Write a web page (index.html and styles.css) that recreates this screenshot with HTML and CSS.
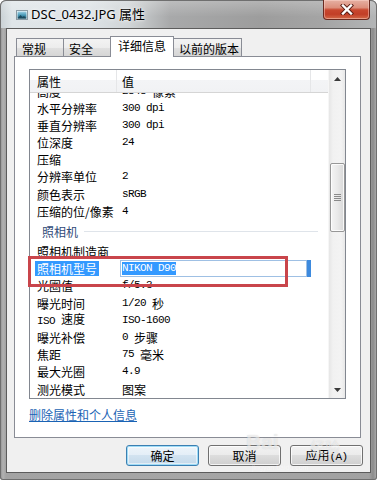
FILE: index.html
```html
<!DOCTYPE html>
<html lang="zh">
<head>
<meta charset="utf-8">
<link rel="stylesheet" href="styles.css">
</head>
<body>
<div class="window">
  <div class="titlebar">
    <svg class="app-icon" width="12" height="10" viewBox="0 0 12 10">
      <defs>
        <linearGradient id="ig" x1="0" y1="0" x2="0" y2="1">
          <stop offset="0" stop-color="#9fd2e6"/>
          <stop offset="0.5" stop-color="#4b9bb8"/>
          <stop offset="1" stop-color="#1d5a73"/>
        </linearGradient>
      </defs>
      <rect x="0.5" y="0.5" width="11" height="9" fill="#f4f7f8" stroke="#8a9aa3"/>
      <rect x="1.5" y="1.5" width="9" height="7" fill="url(#ig)"/>
      <path d="M1.5 8.5 L4.5 5 L6.5 7 L8 6 L10.5 8.5 Z" fill="#1a4a5e"/>
    </svg>
    <span class="title">DSC_0432.JPG 属性</span>
    <div class="close">
      <svg width="14" height="11" viewBox="0 0 14 11">
        <path d="M3 1.5 L11 9.5 M11 1.5 L3 9.5" stroke="#5a1f16" stroke-width="4.2" stroke-linecap="square"/>
        <path d="M3 1.5 L11 9.5 M11 1.5 L3 9.5" stroke="#ffffff" stroke-width="2.4" stroke-linecap="square"/>
      </svg>
    </div>
  </div>
  <div class="client">
    <div class="tabs">
      <div class="tab t1">常规</div>
      <div class="tab t2">安全</div>
      <div class="tab active">详细信息</div>
      <div class="tab t4">以前的版本</div>
    </div>
    <div class="panel">
      <div class="list">
        <div class="list-main">
          <div class="header">
            <div class="hcell c1">属性</div>
            <div class="hcell c2">值</div>
            <div class="hcell c3"></div>
          </div>
          <div class="rows">
            <div class="rows-inner">
              <div class="row"><div class="k"><span>高度</span></div><div class="v"><span class="a">2848 </span>像素</div></div>
              <div class="row"><div class="k"><span>水平分辨率</span></div><div class="v"><span class="a">300 dpi</span></div></div>
              <div class="row"><div class="k"><span>垂直分辨率</span></div><div class="v"><span class="a">300 dpi</span></div></div>
              <div class="row"><div class="k"><span>位深度</span></div><div class="v"><span class="a">24</span></div></div>
              <div class="row"><div class="k"><span>压缩</span></div><div class="v"></div></div>
              <div class="row"><div class="k"><span>分辨率单位</span></div><div class="v"><span class="a">2</span></div></div>
              <div class="row"><div class="k"><span>颜色表示</span></div><div class="v"><span class="a">sRGB</span></div></div>
              <div class="row"><div class="k"><span>压缩的位/像素</span></div><div class="v"><span class="a">4</span></div></div>
              <div class="group"><span>照相机</span><i></i></div>
              <div class="row"><div class="k"><span>照相机制造商</span></div><div class="v"></div></div>
              <div class="row sel"><div class="k"><span>照相机型号</span></div><div class="v"><div class="edit"><span class="a picked">NIKON D90</span></div><div class="edit-bar"></div></div></div>
              <div class="row"><div class="k"><span>光圈值</span></div><div class="v"><span class="a">f/5.3</span></div></div>
              <div class="row"><div class="k"><span>曝光时间</span></div><div class="v"><span class="a">1/20 </span>秒</div></div>
              <div class="row"><div class="k"><span><span class="a">ISO </span>速度</span></div><div class="v"><span class="a">ISO-1600</span></div></div>
              <div class="row"><div class="k"><span>曝光补偿</span></div><div class="v"><span class="a">0 </span>步骤</div></div>
              <div class="row"><div class="k"><span>焦距</span></div><div class="v"><span class="a">75 </span>毫米</div></div>
              <div class="row"><div class="k"><span>最大光圈</span></div><div class="v"><span class="a">4.9</span></div></div>
              <div class="row"><div class="k"><span>测光模式</span></div><div class="v">图案</div></div>
            </div>
          </div>
        </div>
        <div class="scrollbar">
          <div class="arrow"><svg width="7" height="4" viewBox="0 0 7 4"><path d="M0 4 L3.5 0 L7 4 Z" fill="#3a3a3a"/></svg></div>
          <div class="track">
            <div class="thumb">
              <svg width="7" height="7" viewBox="0 0 7 7"><path d="M0 0.5 H7 M0 2.5 H7 M0 4.5 H7 M0 6.5 H7" stroke="#8a8a8a" stroke-width="1"/></svg>
            </div>
          </div>
          <div class="arrow"><svg width="7" height="4" viewBox="0 0 7 4"><path d="M0 0 L7 0 L3.5 4 Z" fill="#3a3a3a"/></svg></div>
        </div>
        <div class="annot"></div>
      </div>
      <div class="link-row"><a class="link">删除属性和个人信息</a></div>
    </div>
    <div class="buttons">
      <button class="btn default">确定</button>
      <button class="btn">取消</button>
      <button class="btn">应用<span class="a">(A)</span></button>
    </div>
  </div>
  <div class="watermark"><span class="wm-bai">Bai</span><span class="wm-jy">经验</span><span class="wm-url">jingyan.baidu.com</span></div>
</div>
</body>
</html>
```

FILE: styles.css
```css
* { box-sizing: border-box; margin: 0; padding: 0; }
html, body { background: #ffffff; }
body {
  width: 377px;
  height: 480px;
  overflow: hidden;
  font-family: "Noto Sans CJK SC", sans-serif;
  font-size: 12px;
  color: #000;
}

.window {
  position: relative;
  width: 377px;
  height: 480px;
  display: flex;
  flex-direction: column;
  padding-bottom: 7px;
  border-radius: 6px 6px 3px 3px;
  background: linear-gradient(90deg, #8e8e8e 0, #b2b2b2 3px, #a3a3a3 6px, #a6a6a6 50%, #a1a1a1 369px, #8c8c8c 373px, #b0b0b0 377px);
  box-shadow: inset 0 0 0 1px #6f6f6f;
  overflow: hidden;
}

.titlebar {
  height: 28px;
  flex: none;
  display: flex;
  align-items: flex-start;
  border-radius: 6px 6px 0 0;
  background:
    linear-gradient(180deg, rgba(255,255,255,0.25) 0, rgba(255,255,255,0) 60%),
    linear-gradient(90deg, #c9d0d4 0, #dfe5e8 12px, #dde3e6 90px, #cfd3d5 130px, #a8a9aa 170px, #9d9d9d 260px, #a4a4a4 320px, #b3b5b6 377px);
  box-shadow: inset 0 1px 0 #6f6f6f, inset 1px 0 0 #6f6f6f, inset -1px 0 0 #6f6f6f;
}

.app-icon { margin: 10px 0 0 16px; flex: none; }

.title {
  margin: 4px 0 0 3px;
  font-family: "Noto Sans", "Noto Sans CJK SC", sans-serif;
  font-size: 13px;
  line-height: 20px;
  color: #000;
  text-shadow: 0 0 5px rgba(255,255,255,0.9), 0 0 2px rgba(255,255,255,0.8);
  white-space: nowrap;
}

.close {
  margin-left: auto;
  margin-right: 7px;
  width: 47px;
  height: 20px;
  flex: none;
  display: flex;
  align-items: center;
  justify-content: center;
  border: 1px solid #6a2a20;
  border-top: none;
  border-radius: 0 0 4px 4px;
  background: linear-gradient(180deg, #e6b1a3 0, #dc8f7c 40%, #c8482f 52%, #c23e27 75%, #d36a48 100%);
  box-shadow: inset 0 0 0 1px rgba(255,220,210,0.45);
}

.client {
  flex: 1;
  margin: 0 6px;
  border: 1px solid #5c5c5c;
  background: #f0f0f0;
  padding-top: 7px;
  display: flex;
  flex-direction: column;
}

.tabs {
  height: 21px;
  margin-left: 9px;
  margin-bottom: -1px;
  display: flex;
  align-items: flex-end;
}

.tab {
  height: 19px;
  border: 1px solid #898c95;
  border-bottom: none;
  margin-right: -1px;
  padding: 2px 0 0 5px;
  line-height: 16px;
  font-size: 12px;
  white-space: nowrap;
  background: linear-gradient(180deg, #f3f3f3 0, #ececec 50%, #e0e0e0 50%, #d4d4d4 100%);
  color: #000;
}
.t1, .t2 { width: 48px; }
.t4 { width: 69px; }
.tab.active {
  width: 64px;
  height: 21px;
  padding: 1px 0 0 7px;
  position: relative;
  z-index: 1;
  background: #ffffff;
}

.panel {
  width: 347px;
  height: 382px;
  margin-left: 7px;
  border: 1px solid #898c95;
  background: #ffffff;
  padding: 12px 14px 0 14px;
}

.list {
  position: relative;
  width: 317px;
  height: 330px;
  border: 1px solid #828790;
  display: flex;
}

.list-main {
  width: 298px;
  display: flex;
  flex-direction: column;
}

.header {
  height: 23px;
  flex: none;
  display: flex;
  background: linear-gradient(180deg, #ffffff 0, #ffffff 45%, #f3f4f6 46%, #f1f2f4 100%);
  border-bottom: 1px solid #d5d5d5;
}
.hcell {
  line-height: 22px;
  padding-top: 1px;
  white-space: nowrap;
}
.hcell.c1 { width: 87px; padding-left: 7px; border-right: 1px solid #e5e6e8; }
.hcell.c2 { width: 194px; padding-left: 5px; border-right: 1px solid #e5e6e8; }
.hcell.c3 { flex: 1; }

.rows {
  flex: 1;
  overflow: hidden;
}
.rows-inner { margin-top: -10.6px; }

.row {
  height: 17.2px;
  display: flex;
  align-items: center;
  line-height: 15px;
  white-space: nowrap;
}
.k { width: 86px; flex: none; padding-left: 5px; }
.k > span { display: inline-block; padding: 0 2px; }
.v { padding-left: 6px; display: flex; align-items: center; }

.a {
  font-family: "Liberation Mono", monospace;
  font-size: 11px;
  letter-spacing: -0.6px;
  white-space: pre;
}

.group {
  height: 23px;
  display: flex;
  align-items: center;
  padding-left: 12px;
  color: #2f4a78;
}
.group i {
  flex: 1;
  height: 1px;
  margin: 1px 10px 0 6px;
  background: #dfe4ea;
}

.row.sel .k > span { background: #3399ff; color: #ffffff; }
.edit {
  width: 187px;
  height: 17px;
  margin-left: -2px;
  padding-left: 1px;
  border: 1px solid #9fc0e4;
  display: flex;
  align-items: center;
}
.picked { background: #3399ff; color: #ffffff; line-height: 13px; }
.edit-bar { width: 4px; height: 17px; background: #3d8ade; }

.scrollbar {
  width: 17px;
  display: flex;
  flex-direction: column;
  background: linear-gradient(90deg, #e6e6e6 0, #f1f1f1 25%, #f3f3f3 75%, #e8e8e8 100%);
  border-left: 1px solid #f6f6f6;
}
.arrow {
  height: 17px;
  flex: none;
  display: flex;
  align-items: center;
  justify-content: center;
}
.track { flex: 1; }
.thumb {
  margin: 76px 0 0 1px;
  width: 15px;
  height: 69px;
  border: 1px solid #979797;
  border-radius: 2px;
  background: linear-gradient(90deg, #f4f4f4 0, #e9e9e9 50%, #d8d8d8 100%);
  box-shadow: inset 0 0 0 1px rgba(255,255,255,0.8);
  display: flex;
  align-items: center;
  justify-content: center;
}

.annot {
  position: absolute;
  left: -2px;
  top: 186px;
  width: 260px;
  height: 31px;
  border: 3px solid #c9454b;
}

.link-row {
  margin-top: 8px;
  line-height: 16px;
}
.link {
  color: #1a63b4;
  text-decoration: underline;
  font-size: 12px;
}

.buttons {
  display: flex;
  justify-content: flex-end;
  gap: 9px;
  margin-top: 7px;
  padding-right: 7px;
}
.btn {
  width: 73px;
  height: 21px;
  border: 1px solid #707070;
  border-radius: 3px;
  background: linear-gradient(180deg, #f2f2f2 0, #ebebeb 50%, #dddddd 50%, #cfcfcf 100%);
  box-shadow: inset 0 0 0 1px rgba(255,255,255,0.75);
  font-family: "Noto Sans CJK SC", sans-serif;
  font-size: 12px;
  color: #000;
  line-height: 17px;
  padding: 0;
}
.btn.default {
  border-color: #3c7fb1;
  box-shadow: inset 0 0 0 1px #9fdcf7, inset 0 0 0 2px rgba(255,255,255,0.5);
  background: linear-gradient(180deg, #eef5fa 0, #e3eef7 50%, #d2e3f0 50%, #c4d9ea 100%);
}

.watermark {
  position: absolute;
  left: 246px;
  top: 426px;
  width: 110px;
  height: 50px;
  color: rgba(255,255,255,0.55);
  pointer-events: none;
}
.wm-bai {
  position: absolute;
  left: 0;
  top: 4px;
  font-family: "Liberation Sans", sans-serif;
  font-weight: bold;
  font-size: 21px;
  text-shadow: 0 0 1px rgba(140,140,140,0.35);
}
.wm-jy {
  position: absolute;
  left: 64px;
  top: 10px;
  font-size: 15px;
  text-shadow: 0 0 1px rgba(140,140,140,0.35);
}
.wm-url {
  position: absolute;
  left: 6px;
  top: 38px;
  font-family: "Liberation Sans", sans-serif;
  font-size: 7px;
  color: rgba(255,255,255,0.45);
}
```
